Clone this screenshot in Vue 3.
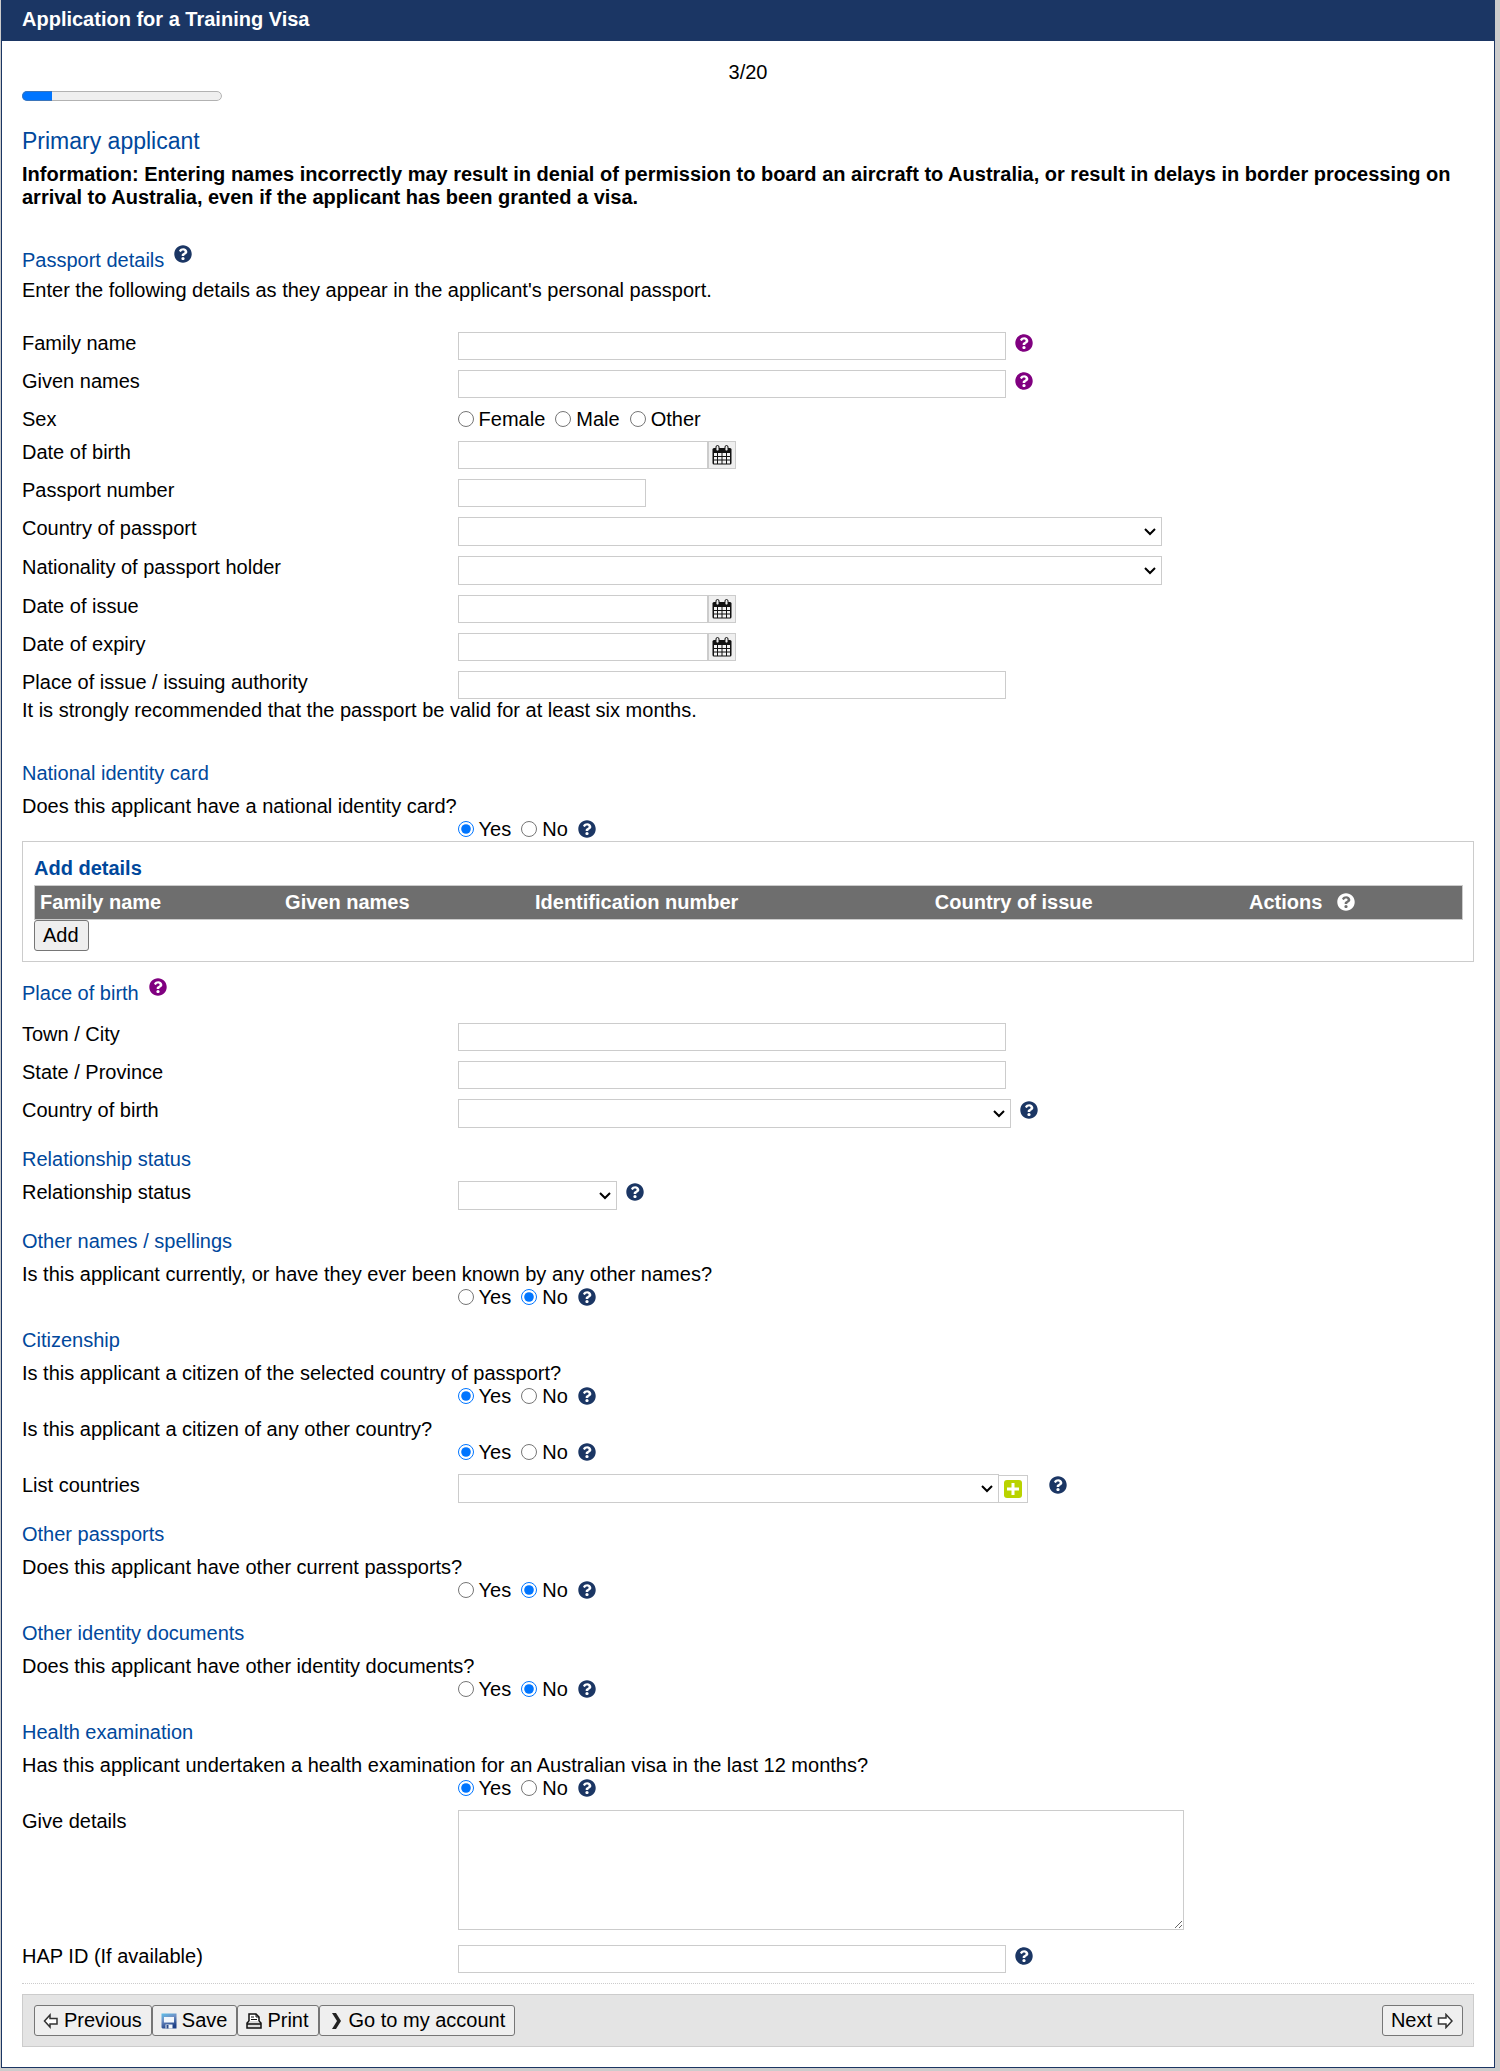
<script setup>
import { h, reactive } from 'vue'

const HelpButton = (props) =>
  h('button', { type: 'button', class: ['help', props.tone], 'aria-label': `Help: ${props.topic}` }, [
    h('svg', { viewBox: '0 0 512 512', 'aria-hidden': 'true' }, [
      h('path', {
        fill: 'currentColor',
        d: 'M504 256c0 137-111 248-248 248S8 393 8 256 119 8 256 8s248 111 248 248zM262.700 90c-54.500 0-89.300 23-116.500 63.800-3.500 5.300-2.400 12.400 2.700 16.300l34.700 26.300c5.200 3.900 12.600 3 16.700-2.100 17.900-22.700 30.100-35.800 57.300-35.800 20.400 0 45.700 13.100 45.700 33 0 15-12.400 22.700-32.500 34C247.100 238.500 216 254.900 216 296v4c0 6.600 5.400 12 12 12h56c6.600 0 12-5.400 12-12v-1.300c0-28.500 83.200-29.600 83.200-106.700 0-58-60.200-102-116.500-102zM256 338c-25.400 0-46 20.600-46 46s20.600 46 46 46 46-20.600 46-46-20.600-46-46-46z'
      })
    ])
  ])
HelpButton.props = ['tone', 'topic']

const total = 20
const step = 3

const sections = [
  {
    title: 'Passport details',
    help: 'navy',
    intro: "Enter the following details as they appear in the applicant's personal passport.",
    spaced: true,
    rows: [
      { id: 'family', type: 'text', label: 'Family name', size: 'wide', help: 'purple' },
      { id: 'given', type: 'text', label: 'Given names', size: 'wide', help: 'purple' },
      { id: 'sex', type: 'radio', label: 'Sex', options: ['Female', 'Male', 'Other'] },
      { id: 'dob', type: 'date', label: 'Date of birth' },
      { id: 'number', type: 'text', label: 'Passport number', size: 'short' },
      { id: 'country', type: 'select', label: 'Country of passport', size: 'full' },
      { id: 'nationality', type: 'select', label: 'Nationality of passport holder', size: 'full' },
      { id: 'issued', type: 'date', label: 'Date of issue' },
      { id: 'expiry', type: 'date', label: 'Date of expiry' },
      { id: 'authority', type: 'text', label: 'Place of issue / issuing authority', size: 'wide' }
    ],
    note: 'It is strongly recommended that the passport be valid for at least six months.'
  },
  {
    title: 'National identity card',
    spaced: true,
    rows: [{ id: 'idcard', type: 'radio', stacked: true, label: 'Does this applicant have a national identity card?', options: ['Yes', 'No'], help: 'navy' }],
    table: true
  },
  {
    title: 'Place of birth',
    help: 'purple',
    rows: [
      { id: 'town', type: 'text', label: 'Town / City', size: 'wide' },
      { id: 'state', type: 'text', label: 'State / Province', size: 'wide' },
      { id: 'birthcountry', type: 'select', label: 'Country of birth', size: 'country', help: 'navy' }
    ]
  },
  {
    title: 'Relationship status',
    rows: [{ id: 'relationship', type: 'select', label: 'Relationship status', size: 'status', help: 'navy' }]
  },
  {
    title: 'Other names / spellings',
    rows: [{ id: 'othernames', type: 'radio', stacked: true, label: 'Is this applicant currently, or have they ever been known by any other names?', options: ['Yes', 'No'], help: 'navy' }]
  },
  {
    title: 'Citizenship',
    rows: [
      { id: 'citizen', type: 'radio', stacked: true, label: 'Is this applicant a citizen of the selected country of passport?', options: ['Yes', 'No'], help: 'navy' },
      { id: 'othercitizen', type: 'radio', stacked: true, label: 'Is this applicant a citizen of any other country?', options: ['Yes', 'No'], help: 'navy' },
      { id: 'countries', type: 'select', label: 'List countries', size: 'list', add: true, help: 'navy' }
    ]
  },
  {
    title: 'Other passports',
    rows: [{ id: 'otherpassports', type: 'radio', stacked: true, label: 'Does this applicant have other current passports?', options: ['Yes', 'No'], help: 'navy' }]
  },
  {
    title: 'Other identity documents',
    rows: [{ id: 'otherdocs', type: 'radio', stacked: true, label: 'Does this applicant have other identity documents?', options: ['Yes', 'No'], help: 'navy' }]
  },
  {
    title: 'Health examination',
    rows: [
      { id: 'health', type: 'radio', stacked: true, label: 'Has this applicant undertaken a health examination for an Australian visa in the last 12 months?', options: ['Yes', 'No'], help: 'navy' },
      { id: 'details', type: 'area', label: 'Give details' },
      { id: 'hap', type: 'text', label: 'HAP ID (If available)', size: 'wide', help: 'navy' }
    ]
  }
]

const answers = reactive({
  sex: '',
  idcard: 'Yes',
  othernames: 'No',
  citizen: 'Yes',
  othercitizen: 'Yes',
  otherpassports: 'No',
  otherdocs: 'No',
  health: 'Yes'
})
</script>

<template>
  <form class="page" @submit.prevent>
    <header class="banner">
      <h1>Application for a Training Visa</h1>
    </header>

    <main class="content">
      <p class="counter" id="counter">{{ step }}/{{ total }}</p>
      <progress :value="step" :max="total" aria-labelledby="counter"></progress>

      <h2>Primary applicant</h2>
      <p class="warning">
        Information: Entering names incorrectly may result in denial of permission to board an aircraft to Australia, or
        result in delays in border processing on arrival to Australia, even if the applicant has been granted a visa.
      </p>

      <section v-for="s in sections" :key="s.title" :class="['section', { spaced: s.spaced, helped: s.help }]">
        <div class="heading">
          <h3>{{ s.title }}</h3>
          <HelpButton v-if="s.help" :tone="s.help" :topic="s.title" />
        </div>
        <p v-if="s.intro" class="intro">{{ s.intro }}</p>

        <div class="rows">
          <template v-for="r in s.rows" :key="r.id">
            <div
              v-if="r.type === 'radio'"
              :class="['row', { stacked: r.stacked }]"
              role="radiogroup"
              :aria-labelledby="r.id + '-label'"
            >
              <span :id="r.id + '-label'" class="label">{{ r.label }}</span>
              <div class="control">
                <label v-for="o in r.options" :key="o" class="option">
                  <input type="radio" :name="r.id" :value="o" v-model="answers[r.id]" />{{ o }}
                </label>
                <HelpButton v-if="r.help" :tone="r.help" :topic="r.label" />
              </div>
            </div>

            <div v-else :class="['row', r.type]">
              <label :for="r.id" class="label">{{ r.label }}</label>
              <div class="control">
                <input v-if="r.type === 'text'" :id="r.id" type="text" :class="['field', r.size]" />
                <template v-else-if="r.type === 'date'">
                  <input :id="r.id" type="text" class="field day" />
                  <button type="button" class="calendar" :aria-label="'Choose ' + r.label">
                    <svg viewBox="0 0 20 20" aria-hidden="true">
                      <rect x="0.500" y="3" width="19" height="16.500" rx="1.500" fill="#111" />
                      <path
                        fill="#f4f4f4"
                        d="M2 8h3v3H2zM6 8h3.500v3H6zM10.500 8H14v3h-3.500zM15 8h3v3h-3zM2 12h3v2.500H2zM6 12h3.500v2.500H6zM10.500 12H14v2.500h-3.500zM15 12h3v2.500h-3zM2 15.500h3v3H2zM6 15.500h3.500v3H6zM10.500 15.500H14v3h-3.500zM15 15.500h3v3h-3z"
                      />
                      <rect x="4" y="0.500" width="3" height="5.500" rx="1.500" fill="#eee" stroke="#111" />
                      <rect x="13" y="0.500" width="3" height="5.500" rx="1.500" fill="#eee" stroke="#111" />
                    </svg>
                  </button>
                </template>
                <textarea v-else-if="r.type === 'area'" :id="r.id" class="field"></textarea>
                <template v-else>
                  <select :id="r.id" :class="['field', r.size]">
                    <option value=""></option>
                  </select>
                  <button v-if="r.add" type="button" class="plus" aria-label="Add country">
                    <svg viewBox="0 0 18 18" aria-hidden="true">
                      <rect width="18" height="18" rx="3" fill="#b9d300" />
                      <path d="M9 3v12M3 9h12" stroke="#fff" stroke-width="3" />
                    </svg>
                  </button>
                </template>
                <HelpButton v-if="r.help" :tone="r.help" :topic="r.label" />
              </div>
            </div>
          </template>
        </div>

        <p v-if="s.note">{{ s.note }}</p>

        <div v-if="s.table" class="details">
          <h4 id="add-details">Add details</h4>
          <table aria-labelledby="add-details">
            <thead>
              <tr>
                <th class="c-family">Family name</th>
                <th class="c-given">Given names</th>
                <th class="c-number">Identification number</th>
                <th class="c-country">Country of issue</th>
                <th><span class="actions">Actions <HelpButton tone="white" topic="Actions" /></span></th>
              </tr>
            </thead>
          </table>
          <button type="button" class="btn">Add</button>
        </div>
      </section>

      <hr />

      <nav class="toolbar" aria-label="Form navigation">
        <button type="button" class="btn">
          <svg viewBox="0 0 16 16" aria-hidden="true">
            <path d="M1.500 8L7 2v3.500h7v5.500H7V14z" fill="#fff" stroke="#333" stroke-width="1.500" />
          </svg>
          Previous
        </button>
        <button type="button" class="btn">
          <svg viewBox="0 0 16 16" aria-hidden="true">
            <defs>
              <linearGradient id="disk" x1="0" y1="0" x2="0.400" y2="1">
                <stop offset="0" stop-color="#5cc0ea" />
                <stop offset="0.450" stop-color="#6f8fc4" />
                <stop offset="1" stop-color="#1d3f86" />
              </linearGradient>
            </defs>
            <path d="M0.500 0.500h15v15h-14l-1-1z" fill="url(#disk)" />
            <path d="M3 4h10v5.500H3zM4.500 11.500h7v4h-7z" fill="#f3f7fc" />
            <path d="M5.500 12h2v3.500h-2z" fill="#2b4b8c" />
          </svg>
          Save
        </button>
        <button type="button" class="btn">
          <svg viewBox="0 0 16 16" aria-hidden="true">
            <path d="M3 9V1h7l3 3v5" fill="#fff" stroke="#111" stroke-width="1.500" />
            <path d="M10 1v3h3M5 4h3M5 6.500h6" fill="none" stroke="#111" />
            <path d="M3 8L1 10v5h14v-5l-2-2" fill="#ddd" stroke="#111" stroke-width="1.500" />
            <path d="M1 11h14" stroke="#111" stroke-width="1.500" />
          </svg>
          Print
        </button>
        <button type="button" class="btn">
          <svg viewBox="0 0 16 16" aria-hidden="true">
            <path d="M4 0h4l5 8-5 8H4l5-8z" fill="#222" />
          </svg>
          Go to my account
        </button>
        <button type="submit" class="btn next">
          Next
          <svg viewBox="0 0 16 16" aria-hidden="true">
            <path d="M15 8L9 1.500V5H1.500v6H9v3.500z" fill="#fff" stroke="#333" stroke-width="1.500" />
          </svg>
        </button>
      </nav>
    </main>
  </form>
</template>

<style>
body {
  background: #ccc;
}
</style>

<style scoped>
.page {
  margin: 0 5px 3px 1px;
  border: 1px solid #1b3664;
  border-top: 0;
  background: #fff;
  color: #000;
  font: 20px/23px "Liberation Sans", Arial, sans-serif;
  display: flow-root;
}
h1, h2, h3, h4, p {
  margin: 0;
  font-size: 20px;
  font-weight: 400;
}
.banner {
  padding: 8px 20px 10px;
  background: #1b3664;
  color: #fff;
}
.banner h1 {
  font-weight: 700;
}
.content {
  padding: 20px;
}
.counter {
  text-align: center;
}
progress {
  display: block;
  width: 200px;
  height: 20px;
  margin: 2px 0 22px;
}
h2 {
  font-size: 23px;
  line-height: 26px;
  color: #00489c;
}
.warning {
  margin: 9px 0 0;
  font-weight: 700;
}
.section {
  margin-top: 20px;
}
.section.spaced {
  margin-top: 40px;
}
.heading {
  display: flex;
  align-items: flex-start;
  gap: 10px;
  margin-bottom: 10px;
  color: #00489c;
}
.heading .help {
  margin: -4px 0 0;
}
.helped .heading {
  margin-bottom: 18px;
}
.helped.spaced .heading {
  margin-bottom: 7px;
}
.intro {
  margin-bottom: 30px;
}
.rows {
  display: flex;
  flex-direction: column;
  gap: 10px;
}
.row {
  display: grid;
  grid-template-columns: 30% 1fr;
}
.row.area {
  margin-bottom: 5px;
}
.stacked .label {
  grid-column: 1 / -1;
}
.stacked .control {
  grid-column: 2;
}
.control {
  display: flex;
  align-items: flex-start;
  min-width: 0;
}
.field {
  box-sizing: border-box;
  height: 28px;
  min-width: 0;
  margin: 0;
  padding: 2px 4px;
  border: 1px solid #ccc;
  border-radius: 0;
  background: #fff;
  color: #000;
  font: inherit;
}
select.field {
  height: 29px;
  padding: 0 20px 0 4px;
  appearance: none;
  background: #fff url("data:image/svg+xml,%3Csvg xmlns='http://www.w3.org/2000/svg' width='12' height='8' viewBox='0 0 12 8'%3E%3Cpath d='M1 1l5 5 5-5' fill='none' stroke='%23000' stroke-width='2'/%3E%3C/svg%3E") no-repeat right 5px center;
}
textarea.field {
  width: 726px;
  height: 120px;
}
.wide { width: 548px; }
.short { width: 188px; }
.day { width: 250px; }
.full { width: 704px; }
.country { width: 553px; }
.status { width: 159px; }
.list { width: 541px; }
.calendar,
.plus {
  box-sizing: border-box;
  flex: none;
  display: flex;
  align-items: center;
  justify-content: center;
  height: 28px;
  padding: 0;
  border: 1px solid #ccc;
}
.calendar {
  width: 28px;
  background: #efefef;
}
.calendar svg {
  width: 20px;
  height: 20px;
}
.plus {
  width: 30px;
  margin: 1px 12px 0 -1px;
  background: #fff;
}
.plus svg {
  width: 18px;
  height: 18px;
}
.option {
  display: flex;
  align-items: center;
  margin-right: 10px;
}
.option input {
  width: 16px;
  height: 16px;
  margin: 0 5px 2px 0;
}
.help {
  flex: none;
  width: 18px;
  height: 18px;
  margin: 2px 0 0 9px;
  padding: 0;
  border: 0;
  background: none;
  color: #1b3664;
}
.help :deep(svg) {
  display: block;
  width: 18px;
  height: 18px;
}
.option + .help {
  margin-left: 0;
}
.help.purple {
  color: #800080;
}
.help.white {
  color: #fff;
}
.details {
  padding: 15px 10px 10px 11px;
  border: 1px solid #ccc;
}
.details h4 {
  margin-bottom: 5px;
  color: #00489c;
  font-weight: 700;
}
table {
  width: 100%;
  border: 1px solid #ccc;
  border-collapse: collapse;
  table-layout: fixed;
  background: #6e6e6e;
  color: #fff;
}
th {
  box-sizing: border-box;
  padding: 5px;
  text-align: left;
}
.c-family { width: 17.2%; }
.c-given { width: 17.5%; }
.c-number { width: 28%; }
.c-country { width: 22%; }
.actions {
  display: flex;
  gap: 6px;
}
.btn {
  display: inline-flex;
  align-items: center;
  gap: 5px;
  height: 31px;
  padding: 0 9px 0 8px;
  border: 1px solid #767676;
  border-radius: 3px;
  background: #efefef;
  color: #000;
  font: inherit;
  box-sizing: border-box;
}
.details .btn {
  display: flex;
}
.btn svg {
  width: 16px;
  height: 16px;
}
hr {
  margin: 10px 0;
  border: 0;
  border-top: 1px dotted #ccc;
}
.toolbar {
  display: flex;
  flex-wrap: wrap;
  padding: 10px 10px 10px 11px;
  border: 1px solid #ccc;
  background: #e4e4e4;
}
.next {
  margin-left: auto;
}
</style>
